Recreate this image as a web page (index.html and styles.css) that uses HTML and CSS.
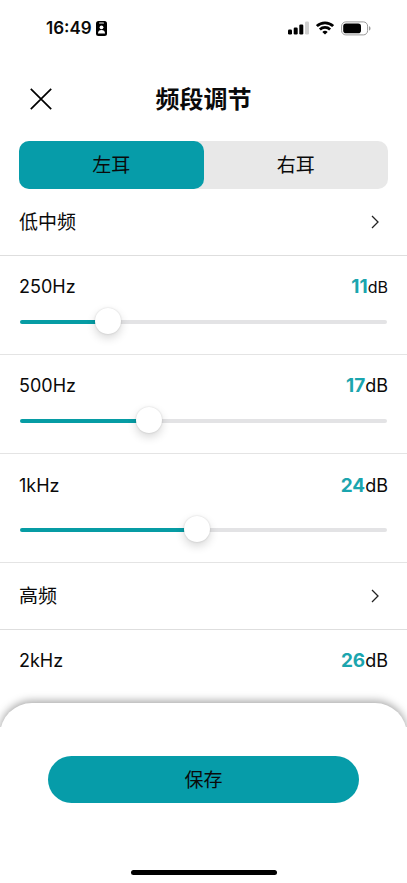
FILE: index.html
```html
<!DOCTYPE html>
<html lang="zh-CN">
<head>
<meta charset="utf-8">
<meta name="viewport" content="width=device-width, initial-scale=1">
<title>频段调节</title>
<link rel="stylesheet" href="styles.css">
</head>
<body>
<div class="status">
  <div class="status-left">
    <span class="time">16:49</span>
    <svg width="11" height="15" viewBox="0 0 11 15" aria-hidden="true">
      <rect width="11" height="15" rx="2.5"/>
      <rect x="3" y="1.4" width="5" height="1.2" rx=".6" fill="#fff"/>
      <circle cx="5.5" cy="6.3" r="1.9" fill="#fff"/>
      <path d="M2 12.4c0-2.4 1.4-3.5 3.5-3.5S9 10 9 12.4z" fill="#fff"/>
    </svg>
  </div>
  <div class="status-right">
    <svg width="21" height="14" viewBox="0 0 21 14" aria-hidden="true">
      <rect x="0" y="8.5" width="4" height="5" rx="1.2"/>
      <rect x="5.7" y="6.5" width="4" height="7" rx="1.2"/>
      <rect x="11.3" y="3.5" width="4" height="10" rx="1.2"/>
      <rect x="17" y=".5" width="4" height="13" rx="1.2" fill="#d0d0d0"/>
    </svg>
    <svg width="18" height="14" viewBox="0 0 18 14" fill="none" stroke="#000" stroke-width="2.7" aria-hidden="true">
      <path d="M.9 5.1a11.6 11.6 0 0 1 16.2 0"/>
      <path d="M3.9 8.5a7.3 7.3 0 0 1 10.2 0"/>
      <path d="M9 13.6 6.3 11a3.9 3.9 0 0 1 5.4 0z" fill="#000" stroke="none"/>
    </svg>
    <svg width="30" height="15" viewBox="0 0 30 15" aria-hidden="true">
      <rect x=".6" y=".9" width="26" height="13" rx="4.2" fill="none" stroke="#999"/>
      <rect x="2.2" y="2.6" width="17.8" height="9.6" rx="2.8"/>
      <path d="M28 5.2c1 .4 1.5 1.2 1.5 2.2S29 9.200 28 9.600z" fill="#999"/>
    </svg>
  </div>
</div>
<header class="header">
  <button class="close" type="button" aria-label="关闭">
    <svg width="22" height="22" viewBox="0 0 22 22" fill="none" stroke="#000" stroke-width="1.7" aria-hidden="true"><path d="M.8.8l20.400 20.400M21.200.8L.8 21.200"/></svg>
  </button>
  <h1 class="title">频段调节</h1>
</header>
<main class="content">
  <div class="tabs">
    <button class="tab active" type="button" aria-pressed="true">左耳</button>
    <button class="tab" type="button" aria-pressed="false">右耳</button>
  </div>
  <button class="group" type="button"><span>低中频</span>
    <svg class="chevron" width="8" height="14" viewBox="0 0 8 14" aria-hidden="true"><path d="M1 1l6 6-6 6"/></svg>
  </button>
  <section class="band">
    <div class="band-head"><label for="b250">250Hz</label><output for="b250"><b>11</b><span class="small-unit">dB</span></output></div>
    <input class="slider" id="b250" type="range" min="0" max="50" value="11" style="--level:.22">
  </section>
  <section class="band">
    <div class="band-head"><label for="b500">500Hz</label><output for="b500"><b>17</b>dB</output></div>
    <input class="slider" id="b500" type="range" min="0" max="50" value="17" style="--level:.34">
  </section>
  <section class="band roomy">
    <div class="band-head"><label for="b1k">1kHz</label><output for="b1k"><b>24</b>dB</output></div>
    <input class="slider" id="b1k" type="range" min="0" max="50" value="24" style="--level:.48">
  </section>
  <button class="group" type="button"><span>高频</span>
    <svg class="chevron" width="8" height="14" viewBox="0 0 8 14" aria-hidden="true"><path d="M1 1l6 6-6 6"/></svg>
  </button>
  <section class="band last">
    <div class="band-head"><span>2kHz</span><output><b>26</b>dB</output></div>
  </section>
</main>
<footer class="sheet">
  <div class="sheet-body">
    <button class="save" type="button">保存</button>
    <div class="home"></div>
  </div>
</footer>
</body>
</html>
```
FILE: styles.css
```css
* { box-sizing: border-box; }

body {
  margin: 0;
  min-height: 100vh;
  display: flex;
  flex-direction: column;
  background: #fff;
  color: #0a0a0a;
  font: 18px/24px Inter, "Noto Sans CJK SC", sans-serif;
  overflow-x: hidden;
}

button {
  margin: 0;
  padding: 0;
  border: 0;
  background: none;
  color: inherit;
  font: inherit;
  font-size: 19px;
}

svg { display: block; }

.status {
  height: 56px;
  padding: 0 36px 0 46px;
  display: flex;
  align-items: center;
  justify-content: space-between;
}

.status-left { display: flex; align-items: center; gap: 4px; }
.status-right { display: flex; align-items: center; gap: 7px; }
.time { font-size: 17px; font-weight: 600; }

.header {
  height: 85px;
  padding: 0 30px;
  display: grid;
  grid-template-columns: 22px 1fr 22px;
  align-items: center;
}

.title {
  margin: 0;
  padding-top: 2px;
  text-align: center;
  font-size: 24px;
  line-height: 32px;
  font-weight: 700;
}

.content { flex: 1; }

.tabs {
  margin: 0 19px;
  display: flex;
  height: 48px;
  border-radius: 10px;
  background: #e8e8e8;
}

.tab { flex: 1; padding-top: 2px; border-radius: 10px; }
.tab.active { background: #069ca9; }

.group {
  width: 100%;
  height: 67px;
  padding: 0 28px 0 19px;
  display: flex;
  align-items: center;
  justify-content: space-between;
  border-bottom: 1px solid #dedede;
}

.group span { padding-top: 2px; }

.chevron { fill: none; stroke: #222; stroke-width: 1.3; }

.band {
  padding: 19px 19px 19px;
  border-bottom: 1px solid #e4e4e4;
}

.band-head { display: flex; justify-content: space-between; }
.band-head b { font-size: 19px; font-weight: 700; color: #1ba5ae; }
.small-unit { font-size: 16px; }

.slider {
  appearance: none;
  display: block;
  width: calc(100% - 2px);
  height: 26px;
  margin: 10px 1px 0;
  background: none;
}

.slider::-webkit-slider-runnable-track {
  height: 4px;
  border-radius: 2px;
  background: linear-gradient(#069ca4, #069ca4) 0 0 / calc(13px + (100% - 26px) * var(--level)) 100% no-repeat #e3e3e5;
}

.slider::-webkit-slider-thumb {
  appearance: none;
  width: 26px;
  height: 26px;
  margin-top: -12px;
  border-radius: 50%;
  background: #fff;
  box-shadow: 0 4px 10px rgba(0, 0, 0, .16), 0 0 2px rgba(0, 0, 0, .16);
}

.roomy { padding-top: 20px; }
.roomy .slider { margin-top: 19px; }
.band.last { border-bottom: 0; }

.sheet {
  padding-top: 24px;
  border-radius: 32px 32px 0 0;
  background: #fff;
  box-shadow: 0 -2px 9px rgba(0, 0, 0, .36);
}

.sheet-body {
  padding: 29px 48px 8px;
  background: #fff;
}

.save {
  display: block;
  width: 100%;
  height: 47px;
  padding-top: 2px;
  border-radius: 24px;
  background: #069ca9;
}

.home {
  width: 146px;
  height: 5px;
  margin: 67px auto 0;
  border-radius: 3px;
  background: #000;
}
```
